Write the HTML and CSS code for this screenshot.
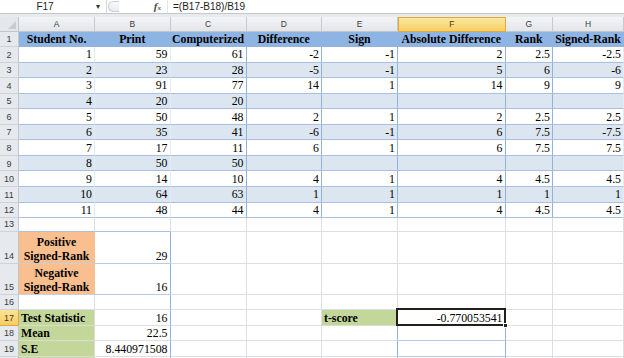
FILE: index.html
```html
<!DOCTYPE html>
<html>
<head>
<meta charset="utf-8">
<link rel="stylesheet" href="styles.css">
</head>
<body>
<div class="app">
  <div class="fbar">
    <div class="namebox"><span class="nbtext">F17</span><span class="nbarrow">&#9662;</span></div>
    <div class="grip"><span class="griplines"></span></div>
    <div class="fxzone"><span class="fx"><i>f</i><span class="fxx">x</span></span></div>
    <div class="formula">=(B17-B18)/B19</div>
  </div>
  <div class="fgap"></div>
  <div class="sheet">
    <div class="corner"><span class="tri"></span></div>
    <div class="ch">A</div><div class="ch">B</div><div class="ch">C</div><div class="ch">D</div>
    <div class="ch">E</div><div class="ch sel">F</div><div class="ch">G</div><div class="ch">H</div>

    <div class="rh">1</div>
    <div class="c hd">Student No.</div><div class="c hd">Print</div><div class="c hd">Computerized</div><div class="c hd">Difference</div>
    <div class="c hd">Sign</div><div class="c hd">Absolute Difference</div><div class="c hd">Rank</div><div class="c hd">Signed-Rank</div>

    <div class="rh">2</div>
    <div class="c t n">1</div><div class="c t n">59</div><div class="c t tv n">61</div><div class="c t tv n">-2</div>
    <div class="c t tv n">-1</div><div class="c t tv n">2</div><div class="c t tv n">2.5</div><div class="c t n">-2.5</div>

    <div class="rh">3</div>
    <div class="c t bd n">2</div><div class="c t bd n">23</div><div class="c t bd tv n">28</div><div class="c t bd tv n">-5</div>
    <div class="c t bd tv n">-1</div><div class="c t bd tv n">5</div><div class="c t bd tv n">6</div><div class="c t bd n">-6</div>

    <div class="rh">4</div>
    <div class="c t n">3</div><div class="c t n">91</div><div class="c t tv n">77</div><div class="c t tv n">14</div>
    <div class="c t tv n">1</div><div class="c t tv n">14</div><div class="c t tv n">9</div><div class="c t n">9</div>

    <div class="rh">5</div>
    <div class="c t bd n">4</div><div class="c t bd n">20</div><div class="c t bd tv n">20</div><div class="c t bd tv n"></div>
    <div class="c t bd tv n"></div><div class="c t bd tv n"></div><div class="c t bd tv n"></div><div class="c t bd n"></div>

    <div class="rh">6</div>
    <div class="c t n">5</div><div class="c t n">50</div><div class="c t tv n">48</div><div class="c t tv n">2</div>
    <div class="c t tv n">1</div><div class="c t tv n">2</div><div class="c t tv n">2.5</div><div class="c t n">2.5</div>

    <div class="rh">7</div>
    <div class="c t bd n">6</div><div class="c t bd n">35</div><div class="c t bd tv n">41</div><div class="c t bd tv n">-6</div>
    <div class="c t bd tv n">-1</div><div class="c t bd tv n">6</div><div class="c t bd tv n">7.5</div><div class="c t bd n">-7.5</div>

    <div class="rh">8</div>
    <div class="c t n">7</div><div class="c t n">17</div><div class="c t tv n">11</div><div class="c t tv n">6</div>
    <div class="c t tv n">1</div><div class="c t tv n">6</div><div class="c t tv n">7.5</div><div class="c t n">7.5</div>

    <div class="rh">9</div>
    <div class="c t bd n">8</div><div class="c t bd n">50</div><div class="c t bd tv n">50</div><div class="c t bd tv n"></div>
    <div class="c t bd tv n"></div><div class="c t bd tv n"></div><div class="c t bd tv n"></div><div class="c t bd n"></div>

    <div class="rh">10</div>
    <div class="c t n">9</div><div class="c t n">14</div><div class="c t tv n">10</div><div class="c t tv n">4</div>
    <div class="c t tv n">1</div><div class="c t tv n">4</div><div class="c t tv n">4.5</div><div class="c t n">4.5</div>

    <div class="rh">11</div>
    <div class="c t bd n">10</div><div class="c t bd n">64</div><div class="c t bd tv n">63</div><div class="c t bd tv n">1</div>
    <div class="c t bd tv n">1</div><div class="c t bd tv n">1</div><div class="c t bd tv n">1</div><div class="c t bd n">1</div>

    <div class="rh">12</div>
    <div class="c t n">11</div><div class="c t n">48</div><div class="c t tv n">44</div><div class="c t tv n">4</div>
    <div class="c t tv n">1</div><div class="c t tv n">4</div><div class="c t tv n">4.5</div><div class="c t n">4.5</div>

    <div class="rh">13</div>
    <div class="c bb"></div><div class="c bb"></div><div class="c"></div><div class="c"></div>
    <div class="c"></div><div class="c"></div><div class="c"></div><div class="c"></div>

    <div class="rh">14</div>
    <div class="c or wrap">Positive<br>Signed-Rank</div><div class="c n bx">29</div><div class="c"></div><div class="c"></div>
    <div class="c"></div><div class="c"></div><div class="c"></div><div class="c"></div>

    <div class="rh">15</div>
    <div class="c or wrap">Negative<br>Signed-Rank</div><div class="c n bx">16</div><div class="c"></div><div class="c"></div>
    <div class="c"></div><div class="c"></div><div class="c"></div><div class="c"></div>

    <div class="rh">16</div>
    <div class="c"></div><div class="c bxr"></div><div class="c"></div><div class="c"></div>
    <div class="c"></div><div class="c"></div><div class="c"></div><div class="c"></div>

    <div class="rh rsel">17</div>
    <div class="c gr">Test Statistic</div><div class="c n bxr">16</div><div class="c"></div><div class="c"></div>
    <div class="c gr bxr">t-score</div>
    <div class="c n bxr active">-0.770053541<div class="selbox"><span class="fillh"></span></div></div>
    <div class="c"></div><div class="c"></div>

    <div class="rh">18</div>
    <div class="c gr">Mean</div><div class="c n bxr">22.5</div><div class="c"></div><div class="c"></div>
    <div class="c bxr"></div><div class="c bxr bbl"></div><div class="c"></div><div class="c"></div>

    <div class="rh">19</div>
    <div class="c gr">S.E</div><div class="c n bxr">8.440971508</div><div class="c"></div><div class="c"></div>
    <div class="c bxr"></div><div class="c bxr bbl"></div><div class="c"></div><div class="c"></div>

    <div class="rh"></div>
    <div class="c gr"></div><div class="c bxr"></div><div class="c"></div><div class="c"></div>
    <div class="c bxr"></div><div class="c bxr"></div><div class="c"></div><div class="c"></div>
  </div>
</div>
</body>
</html>
```

FILE: styles.css
```css
* { box-sizing: border-box; margin: 0; padding: 0; }

html, body {
  width: 624px;
  height: 358px;
  overflow: hidden;
  background: #ffffff;
}

body {
  font-family: "Liberation Serif", "Times New Roman", serif;
  color: #000;
}

.app {
  display: flex;
  flex-direction: column;
  width: 624px;
  height: 358px;
  overflow: hidden;
}

/* ---------- formula bar ---------- */
.fbar {
  height: 14px;
  flex: none;
  display: flex;
  align-items: stretch;
  background: #ffffff;
  border-bottom: 1px solid #c3c8ce;
  font-family: "Liberation Sans", Arial, sans-serif;
  font-size: 10px;
  color: #1e1e1e;
}

.namebox {
  width: 107px;
  display: flex;
  align-items: center;
  border-right: 1px solid #d5d8dc;
}

.nbtext {
  width: 90px;
  text-align: center;
}

.nbarrow {
  font-size: 8px;
  color: #333;
  margin-left: 6px;
}

.grip {
  width: 12px;
  display: flex;
  align-items: center;
  padding: 1px 0 1px 1px;
}

.griplines {
  display: block;
  width: 11px;
  height: 11px;
  border: 1px solid #c9ccd0;
  border-right: none;
  border-radius: 6px 0 0 6px;
  background: linear-gradient(#fafafa, #e9ebee);
}

.fxzone {
  width: 49px;
  display: flex;
  align-items: center;
  justify-content: flex-end;
  padding-right: 6px;
  border-right: 1px solid #e4e6e9;
}

.fx {
  font-family: "Liberation Serif", serif;
  font-size: 11px;
  color: #4a4a4a;
  line-height: 1;
}

.fx i { font-weight: bold; }

.fxx {
  font-size: 7px;
  font-style: italic;
  font-weight: bold;
}

.formula {
  display: flex;
  align-items: center;
  padding-left: 5px;
}

.fgap {
  height: 2.7px;
  flex: none;
  background: #e8ebee;
}

/* ---------- sheet grid ---------- */
.sheet {
  display: grid;
  grid-template-columns: 19px 76px 75.5px 76px 75.5px 76px 107.5px 47.5px 71px;
  grid-template-rows: 15.6px 14.7px repeat(11, 15.57px) 13.4px 32.3px 31px 15.5px 15.5px 15.5px 15.5px 16px;
  flex: none;
}

.corner {
  position: relative;
  background: #e4e7eb;
  border-right: 1px solid #c1c6cc;
  border-bottom: 1px solid #c1c6cc;
}

.tri {
  position: absolute;
  right: 2px;
  bottom: 2px;
  width: 0;
  height: 0;
  border-left: 8px solid transparent;
  border-bottom: 8px solid #c9cdd2;
}

.ch {
  display: flex;
  align-items: center;
  justify-content: center;
  background: linear-gradient(#f3f4f6, #e3e6ea);
  border-right: 1px solid #c5cad0;
  border-bottom: 1px solid #c1c6cc;
  font-family: "Liberation Sans", Arial, sans-serif;
  font-size: 8.5px;
  color: #3c3c3c;
}

.ch.sel {
  background: linear-gradient(#fbe7a1, #f7cf63);
  border: 1px solid #e1a93c;
  color: #4a3a14;
}

.rh {
  display: flex;
  align-items: flex-end;
  justify-content: center;
  padding-bottom: 1px;
  background: #e6e9ed;
  border-right: 1px solid #c1c6cc;
  border-bottom: 1px solid #cfd3d8;
  font-family: "Liberation Sans", Arial, sans-serif;
  font-size: 9px;
  color: #3c3c3c;
  line-height: 1.1;
}

.rh.rsel {
  background: linear-gradient(#fbe29a, #f7cd62);
  border-right: 1px solid #e1a93c;
  border-bottom: 1px solid #e1a93c;
  color: #4a3a14;
}

.c {
  display: flex;
  align-items: flex-end;
  border-right: 1px solid #dcdfe2;
  border-bottom: 1px solid #dcdfe2;
  font-size: 11.8px;
  line-height: 1.12;
  white-space: nowrap;
  padding: 0 2px;
  min-width: 0;
  overflow: visible;
}

.n { justify-content: flex-end; }

.hd {
  justify-content: center;
  background: #8db4e2;
  border-right-color: #8db4e2;
  border-bottom-color: #95b3d7;
  font-weight: bold;
}

.t {
  border-bottom-color: #a9c1df;
  border-right-color: #e6ebf2;
}

.tv { border-right-color: #95b3d7; }

.bd { background: #dce6f1; }

.bb { border-bottom-color: #a9c1df; }

.or {
  background: #fabf8f;
  border-right-color: #fabf8f;
  border-bottom-color: #c9cfd6;
}

.wrap {
  white-space: normal;
  justify-content: center;
  text-align: center;
  font-weight: bold;
}

.bx {
  border-right-color: #95b3d7;
  border-bottom-color: #b8cce4;
}

.bxr { border-right-color: #95b3d7; }

.bbl { border-bottom-color: #b8cce4; }

.gr {
  background: #c4d79b;
  border-right-color: #d8dccf;
  border-bottom-color: #d9dfcd;
  font-weight: bold;
}

.active { position: relative; }

.selbox {
  position: absolute;
  top: -2px;
  left: -2px;
  right: -1px;
  bottom: -1px;
  border: 2px solid #231f1c;
  z-index: 2;
}

.fillh {
  position: absolute;
  right: -4px;
  bottom: -4px;
  width: 5px;
  height: 5px;
  background: #231f1c;
  border: 1px solid #ffffff;
}
```
